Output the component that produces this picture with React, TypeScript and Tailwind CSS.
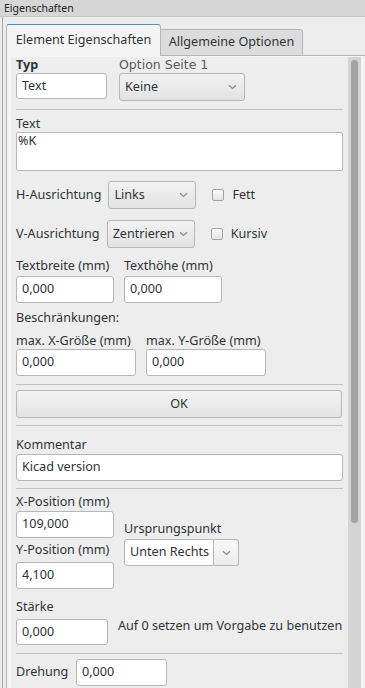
import type { ReactNode } from "react"

const Chevron = () => (
  <svg width="9" height="6" viewBox="0 0 9 6" className="shrink-0">
    <path d="M1 1.2l3.5 3.3L8 1.2" fill="none" stroke="#8c8c8c" strokeWidth="1.2" />
  </svg>
)

const Label = ({ children, className = "" }: { children: ReactNode; className?: string }) => (
  <div className={`h-[16px] leading-[16px] whitespace-nowrap ${className}`}>{children}</div>
)

const Field = ({ value, w, h = 27, className = "" }: { value: string; w: string; h?: number; className?: string }) => (
  <div
    className={`${w} ${h === 26 ? "h-[26px]" : "h-[27px]"} flex shrink-0 items-center rounded-[3px] border border-[#b6b6b3] bg-white pl-[5px] ${className}`}
  >
    {value}
  </div>
)

const Select = ({ value, w }: { value: string; w: string }) => (
  <div
    className={`${w} flex h-[28px] shrink-0 items-center justify-between gap-[4px] rounded-[3px] border border-[#b6b6b3] bg-gradient-to-b from-[#f2f2f2] to-[#e2e2e2] pl-[5px] pr-[7px]`}
  >
    <span>{value}</span>
    <Chevron />
  </div>
)

const Check = ({ label }: { label: string }) => (
  <div className="ml-[16px] flex items-center gap-[8px]">
    <div className="h-[12px] w-[12px] rounded-[2px] border border-[#a4a4a4] bg-gradient-to-b from-[#fbfbfb] to-[#e4e4e4]" />
    <span>{label}</span>
  </div>
)

const Sep = ({ className = "" }: { className?: string }) => (
  <div className={`h-px w-[327px] bg-[#c2c2c2] ${className}`} />
)

export default function App() {
  return (
    <div className="h-[688px] w-[365px] overflow-hidden bg-[#ededed] font-['Noto_Sans',sans-serif] text-[12.6px] text-[#2e3436]">
      <div className="h-[17px] border-b border-[#c4c4c4] bg-[#d6d6d6] pl-[4px] text-[10.5px] leading-[16px] text-[#222]">
        Eigenschaften
      </div>

      <div className="flex h-full pl-[2px]">
        <div className="w-px bg-[#a6a6a6]" />
        <div className="ml-[3px] flex flex-1 flex-col">
          {/* tabs */}
          <div className="flex h-[39px] items-end">
            <div className="flex h-[32px] w-[155px] items-center justify-center rounded-t-[3px] border-x border-t border-[#b4b4b4] border-t-[#4a90d9] bg-[#f4f4f4]">
              Element Eigenschaften
            </div>
            <div className="flex h-[27px] w-[142px] items-center justify-center rounded-tr-[3px] border-b border-r border-t border-[#b4b4b4] bg-[#dcdcdc]">
              Allgemeine Optionen
            </div>
            <div className="h-px flex-1 bg-[#b4b4b4]" />
          </div>

          {/* page */}
          <div className="flex flex-1 border-l border-[#b4b4b4] bg-[#f4f4f4] pt-px">
            <div className="ml-[4px] flex flex-1">
              <div className="w-[337px] bg-[#ededed] pl-[5px] pr-[5px]">
                <div className="flex gap-[12px]">
                  <div>
                    <Label className="font-bold">Typ</Label>
                    <Field value="Text" w="w-[91px]" h={26} />
                  </div>
                  <div>
                    <Label className="font-['DejaVu_Sans',sans-serif] text-[12.5px] text-[#5a5a5a]">Option Seite 1</Label>
                    <Select value="Keine" w="w-[126px]" />
                  </div>
                </div>

                <Sep className="mt-[8px]" />

                <Label className="mt-[6px]">Text</Label>
                <div className="h-[39px] w-[327px] rounded-[2px] border border-[#b6b6b3] bg-white pl-px leading-[16px]">%K</div>

                <div className="mt-[10px] flex items-center">
                  <span className="mr-[7px]">H-Ausrichtung</span>
                  <Select value="Links" w="w-[88px]" />
                  <Check label="Fett" />
                </div>
                <div className="mt-[11px] flex items-center">
                  <span className="mr-[7px]">V-Ausrichtung</span>
                  <Select value="Zentrieren" w="w-[88px]" />
                  <Check label="Kursiv" />
                </div>

                <div className="mt-[10px] flex gap-[10px]">
                  <div>
                    <Label>Textbreite (mm)</Label>
                    <Field value="0,000" w="w-[98px]" className="mt-[2px]" />
                  </div>
                  <div>
                    <Label>Texthöhe (mm)</Label>
                    <Field value="0,000" w="w-[98px]" className="mt-[2px]" />
                  </div>
                </div>

                <Label className="mt-[7px]">Beschränkungen:</Label>
                <div className="mt-[7px] flex gap-[10px]">
                  <div>
                    <Label>max. X-Größe (mm)</Label>
                    <Field value="0,000" w="w-[120px]" />
                  </div>
                  <div>
                    <Label>max. Y-Größe (mm)</Label>
                    <Field value="0,000" w="w-[120px]" />
                  </div>
                </div>

                <Sep className="mt-[8px]" />
                <div className="mt-[5px] flex h-[28px] w-[326px] items-center justify-center rounded-[3px] border border-[#b6b6b3] bg-gradient-to-b from-[#f4f4f4] to-[#e3e3e3]">
                  OK
                </div>
                <Sep className="mt-[7px]" />

                <Label className="mt-[11px]">Kommentar</Label>
                <Field value="Kicad version" w="w-[327px]" className="mt-px" />
                <Sep className="mt-[7px]" />

                <div className="mt-[5px] flex gap-[10px]">
                  <div>
                    <Label>X-Position (mm)</Label>
                    <Field value="109,000" w="w-[98px]" className="mt-px" />
                    <Label className="mt-[4px]">Y-Position (mm)</Label>
                    <Field value="4,100" w="w-[98px]" className="mt-[4px]" />
                  </div>
                  <div className="mt-[27px]">
                    <Label>Ursprungspunkt</Label>
                    <div className="mt-[2px] flex h-[27px]">
                      <div className="flex w-[90px] items-center rounded-l-[3px] border border-[#b6b6b3] bg-white pl-[5px]">
                        Unten Rechts
                      </div>
                      <div className="flex w-[25px] items-center justify-center rounded-r-[3px] border border-l-0 border-[#b6b6b3] bg-gradient-to-b from-[#f8f8f8] to-[#ececec]">
                        <Chevron />
                      </div>
                    </div>
                  </div>
                </div>

                <Label className="mt-[10px]">Stärke</Label>
                <div className="mt-[4px] flex items-start gap-[10px]">
                  <Field value="0,000" w="w-[92px]" h={26} />
                  <div className="-mt-px leading-[16px] whitespace-nowrap">Auf 0 setzen um Vorgabe zu benutzen</div>
                </div>

                <Sep className="mt-[8px]" />
                <div className="mt-[5px] flex items-center">
                  <span className="w-[60px]">Drehung</span>
                  <Field value="0,000" w="w-[91px]" />
                </div>
              </div>

              {/* scrollbar */}
              <div className="w-[13px] bg-[#d4d4d4] pl-[3px] pt-[3px]">
                <div className="h-[463px] w-[7px] rounded-full bg-[#a2a2a2]" />
              </div>
              <div className="w-[4px]" />
            </div>
          </div>
        </div>
      </div>
    </div>
  )
}
